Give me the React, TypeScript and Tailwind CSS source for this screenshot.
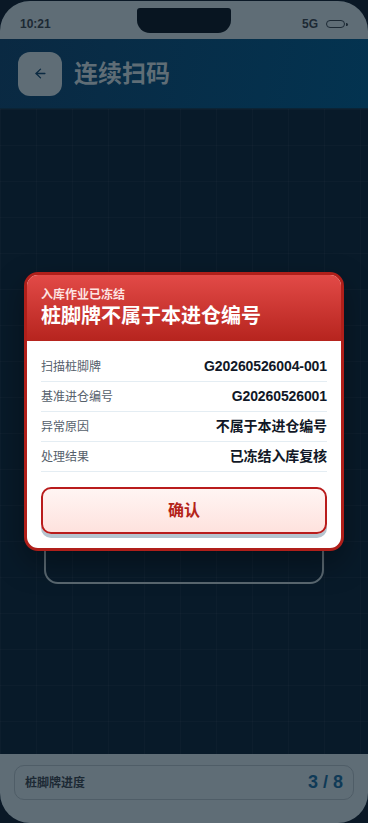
import { ArrowLeft } from 'lucide-react';

const font = "font-['Liberation_Sans','Noto_Sans_CJK_SC',sans-serif]";

const rows = [
  { label: '扫描桩脚牌', value: 'G20260526004-001' },
  { label: '基准进仓编号', value: 'G20260526001' },
  { label: '异常原因', value: '不属于本进仓编号' },
  { label: '处理结果', value: '已冻结入库复核' },
];

const App = () => {
  return (
    <div className={`${font} relative h-[823px] w-[368px] overflow-hidden bg-[#0a1826] pt-px`}>
      <div className="flex h-full flex-col overflow-hidden rounded-[30px] bg-[#081a29]">
        {/* 状态栏 */}
        <div className="relative flex h-[38px] shrink-0 items-center justify-between bg-[#5f6d76] px-5 pt-[8px]">
          <span className="text-[12px] font-bold text-[#1c2934]">10:21</span>
          <div className="absolute left-[137px] top-[7px] h-[25px] w-[94px] rounded-b-[13px] rounded-t-[3px] bg-[#081521]" />
          <div className="flex items-center gap-2 text-[12px] font-bold text-[#1c2934]">
            <span>5G</span>
            <div className="flex items-center">
              <div className="h-[8px] w-[19px] rounded-full border-[1.5px] border-[#1c2934]" />
              <div className="ml-px h-[3px] w-[2px] rounded-r-sm bg-[#1c2934]" />
            </div>
          </div>
        </div>

        {/* 标题栏 */}
        <div className="flex h-[70px] shrink-0 items-center gap-3 border-b border-[#0b2436] bg-[linear-gradient(100deg,#0a2942,#033350)] px-[18px]">
          <div className="flex h-11 w-11 items-center justify-center rounded-xl bg-[#5f6d76]">
            <ArrowLeft size={15} strokeWidth={2.2} className="text-[#0b2a42]" />
          </div>
          <h1 className="text-[24px] font-bold text-[#5f6d76]">连续扫码</h1>
        </div>

        {/* 扫码区 */}
        <div className="flex-1 bg-[#081a29] bg-[linear-gradient(rgba(255,255,255,0.02)_1px,transparent_1px),linear-gradient(90deg,rgba(255,255,255,0.02)_1px,transparent_1px)] bg-[size:36px_36px] px-11 pt-[190px]">
          <div className="h-[285px] rounded-[14px] border-2 border-[#5a6871]" />
        </div>

        {/* 底部进度 */}
        <div className="h-[69px] shrink-0 bg-[#5f6d76] px-[14px] pt-[11px]">
          <div className="flex h-[35px] items-center justify-between rounded-[10px] border border-[#4f5d67] px-[10px]">
            <span className="text-[12px] font-semibold text-[#1c2934]">桩脚牌进度</span>
            <span className="text-[18px] font-bold text-[#0f3a57]">3 / 8</span>
          </div>
        </div>
      </div>

      {/* 冻结弹窗 */}
      <div className="absolute inset-0 flex items-center justify-center px-6">
        <div className="w-full overflow-hidden rounded-[14px] border-[3px] border-[#b01f1a] bg-white shadow-[0_12px_30px_rgba(0,0,0,0.35)]">
          <div className="h-[66px] bg-[linear-gradient(180deg,#e24a47,#b6241e)] px-[14px] pt-[12px]">
            <p className="text-[12px] font-semibold leading-[16px] text-[#fde3e1]">入库作业已冻结</p>
            <p className="text-[20px] font-bold leading-[26px] text-white">桩脚牌不属于本进仓编号</p>
          </div>
          <div className="px-[14px] pb-[14px] pt-[11px]">
            {rows.map((row) => (
              <div
                key={row.label}
                className="flex h-[30px] items-center justify-between border-b border-[#e4edf3]"
              >
                <span className="text-[12px] text-[#55606b]">{row.label}</span>
                <span className="text-[14px] font-bold tracking-[-0.1px] text-[#111827]">{row.value}</span>
              </div>
            ))}
            <button className="mt-[15px] flex h-[47px] w-full items-center justify-center rounded-[10px] border-2 border-[#b91c1c] bg-[linear-gradient(180deg,#fff5f3,#fee2de)] text-[16px] font-bold text-[#b42318] shadow-[0_4px_0_#b5c4cf]">
              确认
            </button>
          </div>
        </div>
      </div>
    </div>
  );
};

export default App;
